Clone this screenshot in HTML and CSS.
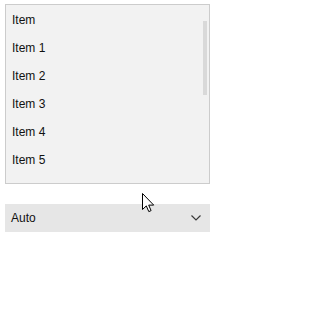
FILE: index.html
```html
<!DOCTYPE html>
<html>
<head>
<meta charset="utf-8">
<link rel="stylesheet" href="styles.css">
</head>
<body>
<div class="page">
  <div class="list">
    <div class="row">Item</div>
    <div class="row">Item 1</div>
    <div class="row">Item 2</div>
    <div class="row">Item 3</div>
    <div class="row">Item 4</div>
    <div class="row">Item 5</div>
    <div class="thumb"></div>
  </div>
  <div class="combo">
    <span class="combo-text">Auto</span>
    <svg class="chev" width="10" height="6" viewBox="0 0 10 6"><polyline points="0.5,0.5 5,5 9.5,0.5" fill="none" stroke="#3a3a3a" stroke-width="1.2"/></svg>
  </div>
  <svg class="cursor" width="13" height="20" viewBox="0 0 13 20"><path d="M0.5 0.5 L0.5 16.5 L4.3 12.9 L6.8 18.6 L9.1 17.6 L6.7 12.1 L11.7 12.1 Z" fill="#fff" stroke="#000" stroke-width="1" stroke-linejoin="miter"/></svg>
</div>
</body>
</html>
```
FILE: styles.css
```css
html, body { margin: 0; padding: 0; background: #fff; }
body { font-family: "Liberation Sans", Arial, sans-serif; font-size: 12px; color: #111; }
.page { position: relative; width: 212px; height: 325px; padding: 4px 0 0 5px; box-sizing: border-box; }
.list {
  position: relative;
  width: 205px; height: 180px; box-sizing: border-box;
  background: #f2f2f2; border: 1px solid #cccccc;
  padding-top: 1px; overflow: hidden;
}
.row { height: 28px; line-height: 28px; padding-left: 6px; }
.thumb { position: absolute; left: 197px; top: 16px; width: 4px; height: 74px; background: #d9d9d9; }
.combo {
  margin-top: 20px; width: 205px; height: 28px;
  background: #e6e6e6; display: flex; align-items: center; justify-content: space-between;
  padding: 0 9px 0 6px; box-sizing: border-box;
}
.combo-text { line-height: 28px; }
.chev { display: block; }
.cursor { position: absolute; left: 142px; top: 193px; }
```
